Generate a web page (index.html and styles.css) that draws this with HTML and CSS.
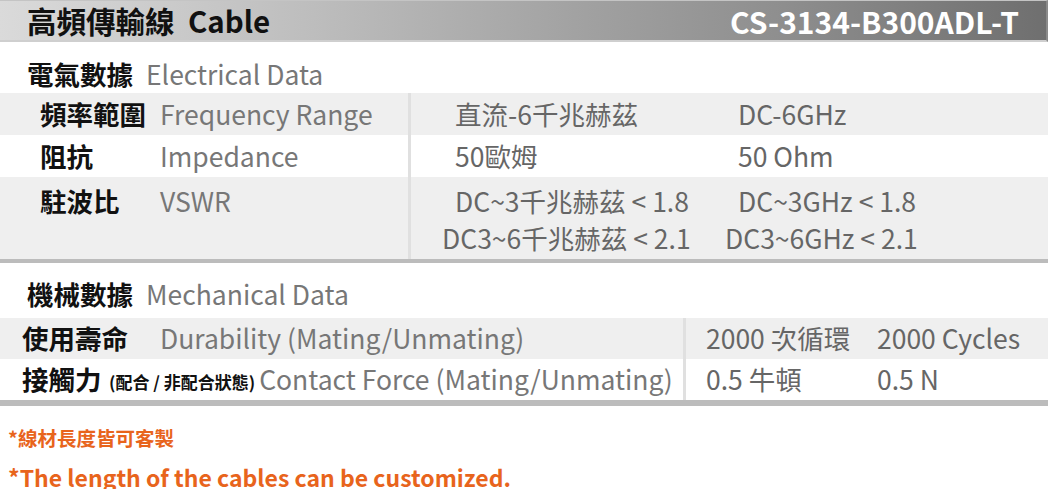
FILE: index.html
```html
<!DOCTYPE html>
<html lang="zh-Hant">
<head>
<meta charset="utf-8">
<link rel="stylesheet" href="styles.css">
</head>
<body>
<header class="titlebar">
  <h1 class="title">高頻傳輸線&nbsp;&nbsp;Cable</h1>
  <span class="model">CS-3134-B300ADL-T</span>
</header>

<h2 class="group-title elec-title"><b>電氣數據</b><span>Electrical Data</span></h2>
<div class="table elec">
  <div class="row shade">
    <div class="label"><b>頻率範圍</b><span>Frequency Range</span></div>
    <div class="vals"><span class="v1">直流-6千兆赫茲</span><span class="v2">DC-6GHz</span></div>
  </div>
  <div class="row">
    <div class="label"><b>阻抗</b><span>Impedance</span></div>
    <div class="vals"><span class="v1">50歐姆</span><span class="v2">50 Ohm</span></div>
  </div>
  <div class="row shade tall">
    <div class="label"><b>駐波比</b><span>VSWR</span></div>
    <div class="vals multi">
      <span class="v1">DC~3千兆赫茲 &lt; 1.8</span><span class="v2">DC~3GHz &lt; 1.8</span>
      <span class="v1 out">DC3~6千兆赫茲 &lt; 2.1</span><span class="v2 out">DC3~6GHz &lt; 2.1</span>
    </div>
  </div>
</div>

<h2 class="group-title mech-title"><b>機械數據</b><span>Mechanical Data</span></h2>
<div class="table mech">
  <div class="row shade">
    <div class="label"><b>使用壽命</b><span>Durability (Mating/Unmating)</span></div>
    <div class="vals"><span class="v1">2000 次循環</span><span class="v2">2000 Cycles</span></div>
  </div>
  <div class="row">
    <div class="label"><b class="short">接觸力</b><small>(配合 / 非配合狀態)</small><span>Contact Force (Mating/Unmating)</span></div>
    <div class="vals"><span class="v1">0.5 牛頓</span><span class="v2">0.5 N</span></div>
  </div>
</div>

<p class="note note-zh">*線材長度皆可客製</p>
<p class="note note-en">*The length of the cables can be customized.</p>
</body>
</html>
```

FILE: styles.css
```css
* { box-sizing: border-box; }
body {
  margin: 0;
  width: 1048px;
  font-family: "Noto Sans CJK TC", "Noto Sans", sans-serif;
  background: #fff;
  color: #111;
}
.titlebar {
  height: 42px;
  display: flex;
  align-items: center;
  justify-content: space-between;
  padding: 0 27px 0 27px;
  background: linear-gradient(to right, #dadada 0%, #bdbdbd 30%, #a2a2a2 55%, #8e8e8e 75%, #6f6f6f 100%);
  border-top: 1px solid #c4c4c4;
  border-bottom: 2px solid #cfcfcf;
  border-right: 2px solid #8a8a8a;
}
.title {
  margin: 0;
  font-size: 29.5px;
  font-weight: 700;
  color: #111;
  line-height: 1;
  white-space: pre;
}
.model {
  font-size: 30px;
  font-weight: 700;
  color: #fff;
  line-height: 1;
}
.group-title {
  margin: 0;
  display: flex;
  align-items: center;
  gap: 13px;
  font-size: 26.5px;
  font-weight: 400;
  line-height: 1;
}
.group-title b { font-weight: 700; color: #111; }
.group-title span { color: #777; }
.elec-title { height: 51px; padding: 13px 0 0 27px; }
.mech-title { height: 55px; padding: 8px 0 0 27px; }

.table .row {
  display: grid;
  align-items: center;
  font-size: 26.5px;
  line-height: 1;
  height: 42px;
}
.table .row.shade { background: #efefef; }
.elec .row { grid-template-columns: 408px 1fr; }
.elec .row.tall { height: 82px; align-items: stretch; }
.mech .row { grid-template-columns: 683px 1fr; height: 41px; }

.label { display: flex; align-items: center; height: 100%; white-space: nowrap; }
.label b { font-weight: 700; color: #111; }
.label span { color: #777; }
.elec .label { padding-left: 40px; }
.elec .label b { width: 120px; }
.mech .label { padding-left: 22px; }
.mech .label b { width: 138px; }
.mech .label b.short { width: 87px; }
.label small {
  font-size: 17px;
  font-weight: 700;
  color: #111;
  margin-right: 4px;
  padding-top: 3px;
}
.tall .label { align-items: flex-start; padding-top: 11px; }

.vals {
  height: 100%;
  display: grid;
  align-content: center;
  border-left: 3px solid #e0e0e0;
  color: #666;
  white-space: nowrap;
}
.elec .vals { grid-template-columns: 283px 1fr; padding-left: 44px; }
.mech .vals { grid-template-columns: 171px 1fr; padding-left: 20px; }
.vals.multi { align-content: start; padding-top: 11px; row-gap: 10px; }
.vals .out { margin-left: -13px; }

.elec { border-bottom: 4px solid #bcbcbc; }
.mech { border-bottom: 6px solid #bcbcbc; }

.note {
  margin: 0;
  padding-left: 8px;
  color: #e8641c;
  font-weight: 700;
  line-height: 1;
}
.note-zh { font-size: 19.5px; margin-top: 22px; }
.note-en { font-size: 23px; margin-top: 18px; }
```
